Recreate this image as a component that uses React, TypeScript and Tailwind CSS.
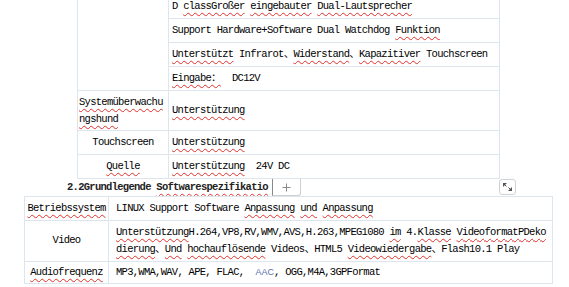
import React from "react";

const W = ({ children }: { children: React.ReactNode }) => (
  <span className="underline decoration-wavy decoration-[#e0302c] decoration-1 underline-offset-[3px]">
    {children}
  </span>
);

const B = "border border-[#dde5ee]";

export default function App() {
  return (
    <div
      className="relative w-[569px] h-[287px] overflow-hidden bg-white text-black text-[10.5px] tracking-[-0.72px]"
      style={{ fontFamily: '"Liberation Mono", "Noto Sans CJK SC", monospace' }}
    >
      <table className="ml-[77px] mt-[-6px] w-[423px] border-collapse table-fixed">
        <colgroup>
          <col className="w-[91px]" />
          <col />
        </colgroup>
        <tbody>
          <tr className="h-[24px]">
            <td rowSpan={4} className={B}></td>
            <td className={`${B} pl-[3px] whitespace-nowrap`}>
              D <W>classGroßer</W> <W>eingebauter</W> <W>Dual-Lautsprecher</W>
            </td>
          </tr>
          <tr className="h-[24px]">
            <td className={`${B} pl-[3px] whitespace-nowrap`}>
              Support Hardware+Software Dual Watchdog <W>Funktion</W>
            </td>
          </tr>
          <tr className="h-[24px]">
            <td className={`${B} pl-[3px] whitespace-nowrap`}>
              <W>Unterstützt</W> Infrarot、<W>Widerstand</W>、<W>Kapazitiver</W> Touchscreen
            </td>
          </tr>
          <tr className="h-[24px]">
            <td className={`${B} pl-[3px] whitespace-pre`}>
              <W>Eingabe：</W>{"  "}DC12V
            </td>
          </tr>
          <tr className="h-[40px]">
            <td className={`${B} pl-[1px] leading-[17px] align-middle`}>
              <W>Systemüberwachu</W>
              <br />
              <W>ngshund</W>
            </td>
            <td className={`${B} pl-[3px]`}>
              <W>Unterstützung</W>
            </td>
          </tr>
          <tr className="h-[24px]">
            <td className={`${B} text-center`}>Touchscreen</td>
            <td className={`${B} pl-[3px]`}>
              <W>Unterstützung</W>
            </td>
          </tr>
          <tr className="h-[24px]">
            <td className={`${B} text-center`}>
              <W>Quelle</W>
            </td>
            <td className={`${B} pl-[3px] whitespace-pre`}>
              <W>Unterstützung</W>{"  "}24V DC
            </td>
          </tr>
        </tbody>
      </table>

      <div className="flex h-[17px] items-stretch">
        <div className="ml-[67px] w-[205px] font-bold leading-[17px] whitespace-nowrap overflow-hidden text-[#222]">
          2.2Grundlegende <W>Softwarespezifikatio</W>
        </div>
        <div className="w-[29px] border-l border-[#888] border-r border-b border-r-[#cfcfcf] border-b-[#cfcfcf] rounded-br-[3px] flex items-center justify-center">
          <svg width="9" height="9" viewBox="0 0 9 9" className="block">
            <path d="M4.5 0.5 V8.5 M0.5 4.5 H8.5" stroke="#8a8a8a" strokeWidth="1" />
          </svg>
        </div>
      </div>
      <div className="absolute left-[499px] top-[179px] w-[17px] h-[16px] border border-[#cfd3d8] rounded-[3px] bg-white">
        <svg width="15" height="14" viewBox="0 0 15 14" className="block">
          <path d="M3 3 L7 3 L3 7 Z" fill="#555" />
          <path d="M4 4 L6.5 6.5" stroke="#555" strokeWidth="1" />
          <path d="M12 11 L8 11 L12 7 Z" fill="#555" />
          <path d="M11 10 L8.5 7.5" stroke="#555" strokeWidth="1" />
        </svg>
      </div>

      <table className="ml-[24px] w-[529px] border-collapse table-fixed">
        <colgroup>
          <col className="w-[84px]" />
          <col />
        </colgroup>
        <tbody>
          <tr className="h-[24px]">
            <td className={`${B} text-center`}>
              <W>Betriebssystem</W>
            </td>
            <td className={`${B} pl-[7px] whitespace-nowrap`}>
              LINUX Support Software <W>Anpassung</W> <W>und</W> <W>Anpassung</W>
            </td>
          </tr>
          <tr className="h-[41px]">
            <td className={`${B} text-center`}>Video</td>
            <td className={`${B} pl-[7px] leading-[17px] whitespace-nowrap`}>
              <W>Unterstützung</W>H.264,VP8,RV,WMV,AVS,H.263,MPEG1080 <W>im</W> 4.<W>Klasse</W> <W>VideoformatPDeko</W>
              <br />
              <W>dierung</W>、<W>Und</W> <W>hochauflösende</W> Videos、HTML5 <W>Videowiedergabe</W>、Flash10.1 Play
            </td>
          </tr>
          <tr className="h-[22px]">
            <td className={`${B} text-center`}>
              <W>Audiofrequenz</W>
            </td>
            <td className={`${B} pl-[7px] whitespace-pre`}>
              MP3,WMA,WAV, APE, FLAC,{"  "}
              <span
                className="text-[#5b6fae] tracking-normal text-[9px]"
                style={{ fontFamily: '"Liberation Sans", sans-serif' }}
              >
                AAC
              </span>
              , OGG,M4A,3GPFormat
            </td>
          </tr>
        </tbody>
      </table>
    </div>
  );
}
